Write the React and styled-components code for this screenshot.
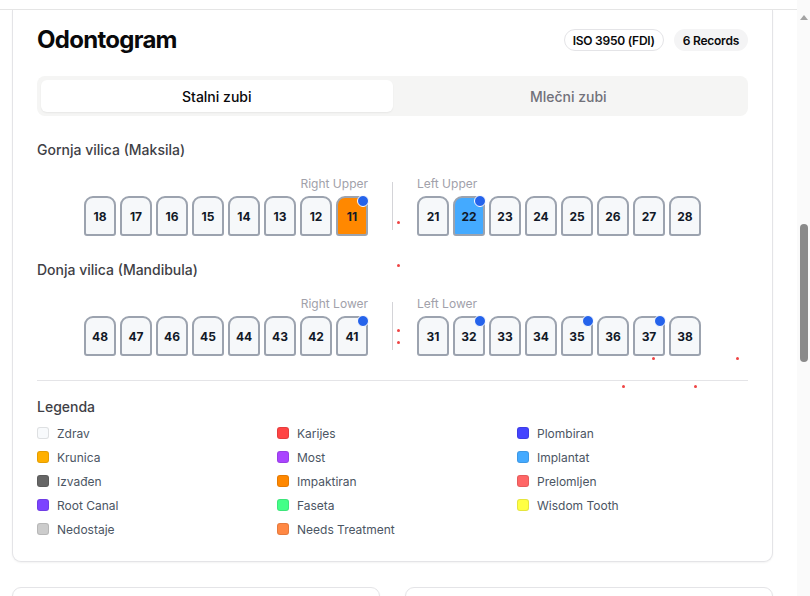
import React from "react";
import styled, { createGlobalStyle } from "styled-components";

const GlobalStyle = createGlobalStyle`
  html, body {
    margin: 0;
    padding: 0;
    background: #ffffff;
  }
  body {
    font-family: Inter, "Noto Sans", sans-serif;
    color: #09090b;
  }
  * {
    box-sizing: border-box;
  }
`;

const upperRight = ["18", "17", "16", "15", "14", "13", "12", "11"];
const upperLeft = ["21", "22", "23", "24", "25", "26", "27", "28"];
const lowerRight = ["48", "47", "46", "45", "44", "43", "42", "41"];
const lowerLeft = ["31", "32", "33", "34", "35", "36", "37", "38"];

// stanje po zubu
const toothState = {
  11: { fill: "#ff8800", marked: true },
  22: { fill: "#44aaff", marked: true },
  41: { marked: true },
  32: { marked: true },
  35: { marked: true },
  37: { marked: true },
};

const legend = [
  { label: "Zdrav", color: "#f8fafc" },
  { label: "Karijes", color: "#ff4444" },
  { label: "Plombiran", color: "#4444ff" },
  { label: "Krunica", color: "#ffb000" },
  { label: "Most", color: "#aa44ff" },
  { label: "Implantat", color: "#44aaff" },
  { label: "Izvađen", color: "#666666" },
  { label: "Impaktiran", color: "#ff8800" },
  { label: "Prelomljen", color: "#ff6666" },
  { label: "Root Canal", color: "#7c44ff" },
  { label: "Faseta", color: "#44ff88" },
  { label: "Wisdom Tooth", color: "#ffff44" },
  { label: "Nedostaje", color: "#cccccc" },
  { label: "Needs Treatment", color: "#ff8844" },
];

// markeri povrsina (page coords)
const surfaceMarks = [
  [398, 222],
  [398, 265],
  [398, 330],
  [398, 342],
  [653, 358],
  [737, 358],
  [623, 386],
  [695, 386],
];

const Tooth = ({ number }) => {
  const state = toothState[number] || {};
  return (
    <ToothBox $fill={state.fill}>
      {number}
      {state.marked && <Marker />}
    </ToothBox>
  );
};

const Quadrant = ({ label, teeth, align }) => (
  <QuadrantCol $align={align}>
    <QuadrantLabel>{label}</QuadrantLabel>
    <TeethRow>
      {teeth.map((n) => (
        <Tooth key={n} number={n} />
      ))}
    </TeethRow>
  </QuadrantCol>
);

const App = () => {
  return (
    <>
      <GlobalStyle />
      <TopStrip />
      <Main>
        <Card>
          {surfaceMarks.map(([x, y], i) => (
            <SurfaceDot key={i} style={{ left: x - 14.5, top: y - 11.5 }} />
          ))}
          <Header>
            <Title>Odontogram</Title>
            <Badges>
              <Badge $outline>ISO 3950 (FDI)</Badge>
              <Badge>6 Records</Badge>
            </Badges>
          </Header>

          <Tabs>
            <Tab $active>Stalni zubi</Tab>
            <Tab>Mlečni zubi</Tab>
          </Tabs>

          <JawTitle>Gornja vilica (Maksila)</JawTitle>
          <JawRow>
            <Quadrant label="Right Upper" teeth={upperRight} align="flex-end" />
            <Divider />
            <Quadrant label="Left Upper" teeth={upperLeft} align="flex-start" />
          </JawRow>

          <JawTitle>Donja vilica (Mandibula)</JawTitle>
          <JawRow>
            <Quadrant label="Right Lower" teeth={lowerRight} align="flex-end" />
            <Divider />
            <Quadrant label="Left Lower" teeth={lowerLeft} align="flex-start" />
          </JawRow>

          <Separator />

          <LegendTitle>Legenda</LegendTitle>
          <LegendGrid>
            {legend.map(({ label, color }) => (
              <LegendItem key={label}>
                <Swatch $color={color} />
                {label}
              </LegendItem>
            ))}
          </LegendGrid>
        </Card>

        <BottomRow>
          <SmallCard />
          <SmallCard />
        </BottomRow>
      </Main>

      <ScrollRail>
        <ScrollArrow />
        <ScrollThumb />
      </ScrollRail>
    </>
  );
};

const TopStrip = styled.div`
  height: 10px;
  border-bottom: 1px solid #e5e5e5;
`;

const Main = styled.main`
  width: 761px;
  margin: 0 0 0 12px;
  padding-bottom: 40px;
`;

const Card = styled.section`
  position: relative;
  border: 1px solid #e4e4e7;
  border-top: none;
  border-radius: 0 0 9px 9px;
  box-shadow: 0 1px 2px rgba(0, 0, 0, 0.05);
  background: #ffffff;
  padding: 14px 24px 20px 24px;
`;

const SurfaceDot = styled.span`
  position: absolute;
  width: 3px;
  height: 3px;
  border-radius: 50%;
  background: #ef4444;
`;

const Header = styled.div`
  display: flex;
  align-items: center;
  justify-content: space-between;
  height: 32px;
`;

const Title = styled.h2`
  margin: 0;
  font-size: 24px;
  font-weight: 700;
  letter-spacing: -0.03em;
  line-height: 32px;
  color: #09090b;
`;

const Badges = styled.div`
  display: flex;
  gap: 10px;
  align-items: center;
`;

const Badge = styled.span`
  display: inline-flex;
  align-items: center;
  height: 22px;
  padding: 0 8px;
  border-radius: 999px;
  font-size: 12px;
  font-weight: 600;
  letter-spacing: -0.02em;
  color: #09090b;
  background: ${(p) => (p.$outline ? "#ffffff" : "#f4f4f5")};
  border: 1px solid ${(p) => (p.$outline ? "#e4e4e7" : "transparent")};
`;

const Tabs = styled.div`
  margin-top: 20px;
  display: grid;
  grid-template-columns: 1fr 1fr;
  height: 40px;
  padding: 4px;
  border-radius: 8px;
  background: #f5f5f4;
`;

const Tab = styled.div`
  display: flex;
  align-items: center;
  justify-content: center;
  border-radius: 6px;
  font-size: 14px;
  font-weight: 500;
  color: ${(p) => (p.$active ? "#09090b" : "#71717a")};
  background: ${(p) => (p.$active ? "#ffffff" : "transparent")};
  box-shadow: ${(p) => (p.$active ? "0 1px 2px rgba(0,0,0,0.06)" : "none")};
`;

const JawTitle = styled.h3`
  margin: 24px 0 0 0;
  font-size: 14px;
  line-height: 20px;
  font-weight: 500;
  color: #3f3f46;
`;

const JawRow = styled.div`
  margin-top: 16px;
  display: flex;
  justify-content: center;
  align-items: center;
  gap: 24px;
`;

const QuadrantCol = styled.div`
  display: flex;
  flex-direction: column;
  align-items: ${(p) => p.$align};
`;

const QuadrantLabel = styled.div`
  font-size: 12px;
  line-height: 16px;
  color: #a1a1aa;
  margin-bottom: 4px;
`;

const TeethRow = styled.div`
  display: flex;
  gap: 4px;
`;

const ToothBox = styled.div`
  position: relative;
  width: 32px;
  height: 40px;
  display: flex;
  align-items: center;
  justify-content: center;
  border: 2px solid #9ca3af;
  border-radius: 9px 9px 3px 3px;
  background: ${(p) => p.$fill || "#f6f8fa"};
  font-size: 12px;
  font-weight: 700;
  color: #111827;
`;

const Marker = styled.span`
  position: absolute;
  top: -3px;
  right: -3px;
  width: 12px;
  height: 12px;
  border-radius: 50%;
  background: #2563eb;
  border: 1px solid #ffffff;
`;

const Divider = styled.div`
  width: 1px;
  height: 48px;
  background: #d4d4d8;
  align-self: center;
`;

const Separator = styled.hr`
  margin: 24px 0 0 0;
  border: none;
  border-top: 1px solid #e4e4e7;
`;

const LegendTitle = styled.h4`
  margin: 16px 0 4px 0;
  font-size: 14px;
  line-height: 20px;
  font-weight: 500;
  color: #3f3f46;
`;

const LegendGrid = styled.div`
  display: grid;
  grid-template-columns: repeat(3, 240px);
  grid-auto-rows: 24px;
`;

const LegendItem = styled.div`
  display: flex;
  align-items: center;
  gap: 8px;
  font-size: 12px;
  color: #4b5563;
`;

const Swatch = styled.span`
  width: 12px;
  height: 12px;
  border-radius: 3px;
  background: ${(p) => p.$color};
  border: 1px solid rgba(0, 0, 0, 0.1);
`;

const BottomRow = styled.div`
  margin-top: 25px;
  display: grid;
  grid-template-columns: 1fr 1fr;
  gap: 25px;
`;

const SmallCard = styled.div`
  min-height: 300px;
  border: 1px solid #e4e4e7;
  border-radius: 9px;
  box-shadow: 0 1px 2px rgba(0, 0, 0, 0.05);
`;

const ScrollRail = styled.div`
  position: fixed;
  top: 0;
  right: 0;
  width: 13px;
  height: 100vh;
  background: #fafafa;
`;

const ScrollArrow = styled.span`
  position: absolute;
  top: 15px;
  left: 3px;
  width: 0;
  height: 0;
  border-left: 4px solid transparent;
  border-right: 4px solid transparent;
  border-bottom: 5px solid #a3a3a3;
`;

const ScrollThumb = styled.span`
  position: absolute;
  top: 224px;
  left: 3px;
  width: 8px;
  height: 138px;
  border-radius: 4px;
  background: #8a8a8a;
`;

export default App;
